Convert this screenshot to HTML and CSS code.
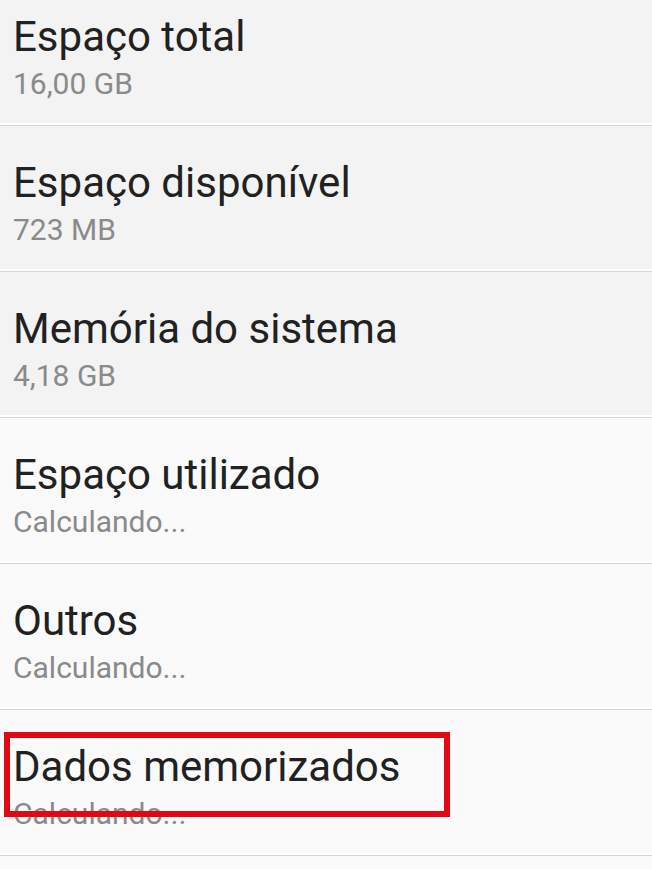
FILE: index.html
```html
<!DOCTYPE html>
<html lang="pt">
<head>
<meta charset="utf-8">
<link rel="stylesheet" href="styles.css">
</head>
<body>
<ul class="list">
  <li class="row row-dim"><div class="title">Espaço total</div><div class="sub">16,00 GB</div></li>
  <li class="row row-dim"><div class="title">Espaço disponível</div><div class="sub">723 MB</div></li>
  <li class="row row-dim"><div class="title">Memória do sistema</div><div class="sub">4,18 GB</div></li>
  <li class="row"><div class="title">Espaço utilizado</div><div class="sub">Calculando...</div></li>
  <li class="row"><div class="title">Outros</div><div class="sub">Calculando...</div></li>
  <li class="row"><div class="title">Dados memorizados</div><div class="sub">Calculando...</div><span class="mark"></span></li>
</ul>
</body>
</html>
```
FILE: styles.css
```css
html, body {
  margin: 0;
  padding: 0;
  background: #fafafa;
  overflow: hidden;
}
.list {
  list-style: none;
  margin: -20px 0 0 0;
  padding: 0;
  font-family: Roboto, "Noto Sans", sans-serif;
}
.row {
  position: relative;
  height: 145px;
  border-bottom: 1px solid #d6d6d6;
  box-shadow: inset 0 -2px 0 #ffffff;
  padding: 0 13px;
  background: #fafafa;
}
.row-dim {
  background: #f3f3f3;
}
.title {
  font-size: 42px;
  color: #212121;
  line-height: 48px;
  padding-top: 33px;
  white-space: nowrap;
}
.sub {
  font-size: 30px;
  color: #8a8a8a;
  line-height: 36px;
  margin-top: 5px;
  white-space: nowrap;
}
.mark {
  position: absolute;
  left: 4px;
  top: 22px;
  width: 434px;
  height: 73px;
  border: 6px solid #e30613;
}
```
